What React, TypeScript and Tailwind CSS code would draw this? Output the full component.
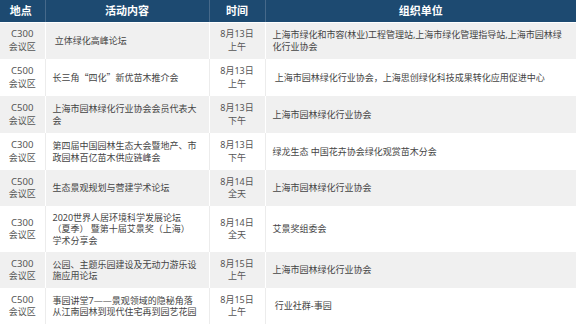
type Row = {
  place: string;
  title: string[];
  date: string;
  time: string;
  org: string[];
  h: string;
};

const rows: Row[] = [
  {
    place: "C300",
    title: ["\u00a0立体绿化高峰论坛"],
    date: "8月13日",
    time: "上午",
    org: ["上海市绿化和市容(林业)工程管理站,上海市绿化管理指导站,上海市园林绿", "化行业协会"],
    h: "h-[37px]",
  },
  {
    place: "C500",
    title: ["长三角“四化”新优苗木推介会"],
    date: "8月13日",
    time: "上午",
    org: ["\u00a0上海市园林绿化行业协会，上海思创绿化科技成果转化应用促进中心"],
    h: "h-[37px]",
  },
  {
    place: "C500",
    title: ["上海市园林绿化行业协会会员代表大", "会"],
    date: "8月13日",
    time: "下午",
    org: ["上海市园林绿化行业协会"],
    h: "h-[37px]",
  },
  {
    place: "C300",
    title: ["第四届中国园林生态大会暨地产、市", "政园林百亿苗木供应链峰会"],
    date: "8月13日",
    time: "下午",
    org: ["绿龙生态 中国花卉协会绿化观赏苗木分会"],
    h: "h-[37px]",
  },
  {
    place: "C500",
    title: ["生态景观规划与营建学术论坛"],
    date: "8月14日",
    time: "全天",
    org: ["上海市园林绿化行业协会"],
    h: "h-[36px]",
  },
  {
    place: "C300",
    title: ["2020世界人居环境科学发展论坛", "（夏季） 暨第十届艾景奖（上海）", "学术分享会"],
    date: "8月14日",
    time: "全天",
    org: ["艾景奖组委会"],
    h: "h-[46px]",
  },
  {
    place: "C300",
    title: ["公园、主题乐园建设及无动力游乐设", "施应用论坛"],
    date: "8月15日",
    time: "上午",
    org: ["上海市园林绿化行业协会"],
    h: "h-[36px]",
  },
  {
    place: "C500",
    title: ["事园讲堂7——景观领域的隐秘角落", "从江南园林到现代住宅再到园艺花园"],
    date: "8月15日",
    time: "上午",
    org: ["\u00a0行业社群-事园"],
    h: "h-[36px]",
  },
];

export default function App() {
  return (
    <div className="w-[576px] h-[324px] overflow-hidden bg-white font-['Noto_Sans','Noto_Sans_CJK_SC',sans-serif]">
      <table className="w-[576px] table-fixed border-collapse">
        <colgroup>
          <col className="w-[45px]" />
          <col className="w-[164px]" />
          <col className="w-[56px]" />
          <col className="w-[311px]" />
        </colgroup>
        <thead>
          <tr className="h-[22px] bg-[#1d4a71] text-white text-[11px] font-bold leading-[14px]">
            <th className="border-r border-b border-r-[#46698a] border-b-white pr-[3px] text-center">地点</th>
            <th className="border-r border-b border-r-[#46698a] border-b-white text-center">活动内容</th>
            <th className="border-r border-b border-r-[#46698a] border-b-white text-center">时间</th>
            <th className="border-b border-b-white text-center">组织单位</th>
          </tr>
        </thead>
        <tbody>
          {rows.map((r, i) => {
            const gray = i % 2 === 0;
            const line = gray ? "border-white" : "border-[#ececec]";
            return (
              <tr key={i} className={`${r.h} ${gray ? "bg-[#f0f0f0]" : "bg-white"} text-[9px]`}>
                <td className={`border-r ${line} text-center align-middle text-[#555] leading-[12.5px]`}>
                  <div className="text-[9.5px]">{r.place}</div>
                  <div>会议区</div>
                </td>
                <td className={`border-r ${line} pl-[7px] align-middle text-[#444] leading-[11.5px] whitespace-nowrap`}>
                  {r.title.map((t, j) => (
                    <div key={j} className="[&_q]:font-['Noto_Sans_CJK_SC']">
                      {t.includes("“") ? (
                        <>
                          {t.split("“")[0]}
                          <span className="font-['Noto_Sans_CJK_SC',sans-serif]">“{t.split("“")[1].split("”")[0]}”</span>
                          {t.split("”")[1]}
                        </>
                      ) : (
                        t
                      )}
                    </div>
                  ))}
                </td>
                <td className={`border-r ${line} text-center align-middle text-[#555] leading-[12.5px]`}>
                  <div>{r.date}</div>
                  <div>{r.time}</div>
                </td>
                <td className="pl-[7px] align-middle text-[#444] leading-[12px] whitespace-nowrap">
                  {r.org.map((t, j) => (
                    <div key={j}>{t}</div>
                  ))}
                </td>
              </tr>
            );
          })}
        </tbody>
      </table>
    </div>
  );
}
